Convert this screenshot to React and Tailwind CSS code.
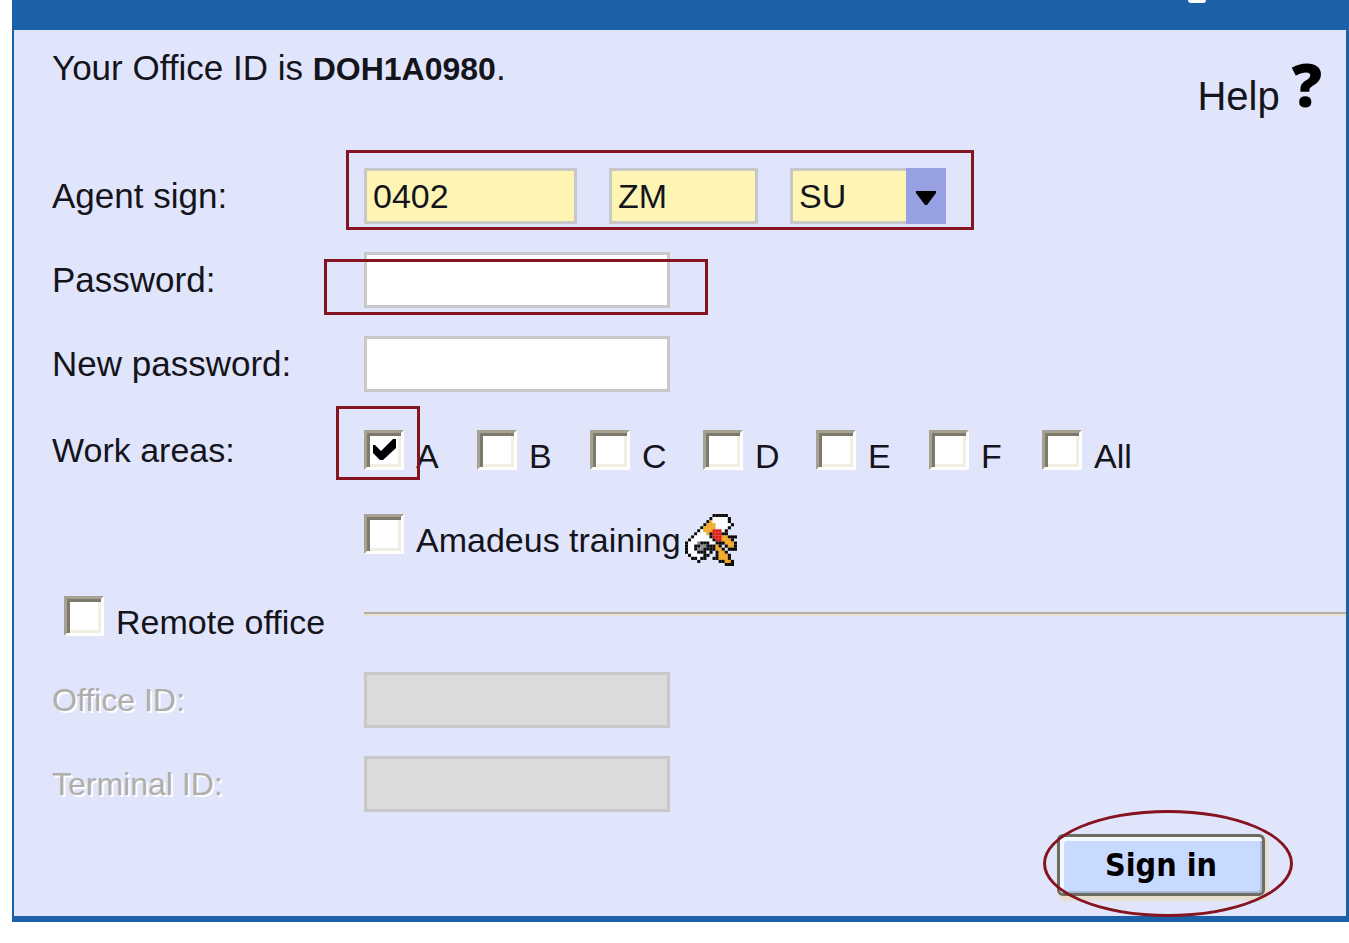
import React, { useState } from "react";

const workAreas = ["A", "B", "C", "D", "E", "F", "All"];

const fieldClass =
  "block h-14 rounded-none border-3 border-[#c8c8c8] px-[6px] outline-none";

// --- Pixel art for the training icon ---
const scrollPixels = [
  ".........KKKKK...",
  "........KWWWWWK..",
  ".......KYWWWWWK..",
  "......KYYYWWWWWK.",
  ".....KYYYYWWWWK..",
  "....KWYYYRRRWK...",
  "...KWWWYKRRRKK...",
  "..KWWWWWKRRRYYKKK",
  ".KWWWWWWWKRRYYYK.",
  "KWWWGKKKWWKKKYYYK",
  "KWWKKGGKKKYK.KYYK",
  "KWWKGGKKKKYYK.KKK",
  "KWWWKKKWK.KYYK...",
  ".KWWWWKK..KYYYK..",
  "..KKWKK..KKYYYK..",
  "....K......KKYYK.",
  ".............KKK.",
];

const pixelColors = {
  K: "#0b0b0b",
  W: "#ffffff",
  Y: "#f5a81c",
  R: "#e01b0c",
  G: "#8a8a8a",
};

function TrainingIcon() {
  return (
    <svg
      viewBox="0 0 17 17"
      className="mt-3 size-[52px] shrink-0"
      aria-hidden="true"
    >
      {scrollPixels.map((row, y) =>
        row
          .split("")
          .map((p, x) =>
            p === "." ? null : (
              <rect key={`${x}-${y}`} x={x} y={y} width="1.02" height="1.02" fill={pixelColors[p]} />
            )
          )
      )}
    </svg>
  );
}

// --- Red marker drawn over a field ---
function Marker({ className }) {
  return (
    <span
      aria-hidden="true"
      className={`absolute border-3 border-[#84141f] pointer-events-none ${className}`}
    />
  );
}

function Checkbox({ label, checked, onChange, marked }) {
  return (
    <label className="flex items-center gap-3 whitespace-nowrap">
      <span className="relative size-10 shrink-0">
        <input
          type="checkbox"
          checked={checked}
          onChange={onChange}
          className="block size-10 appearance-none bg-white border-3 border-t-[#a5a294] border-l-[#a5a294] border-r-white border-b-white shadow-[inset_3px_3px_0_#7d7a6c,inset_-3px_-3px_0_#f1efe2]"
        />
        {checked && (
          <svg
            viewBox="0 0 24 22"
            className="absolute left-[9px] top-[9px] h-[22px] w-6 pointer-events-none"
            aria-hidden="true"
          >
            <path d="M0 6 H2 L8 12 L20 0 H23 V9 L10 21 H7 L0 14 Z" fill="#000" />
          </svg>
        )}
        {marked && <Marker className="-left-7 -right-4 -top-6 -bottom-[10px]" />}
      </span>
      <span className="mt-3 leading-10">{label}</span>
    </label>
  );
}

function Row({ label, htmlFor, disabled, children }) {
  return (
    <div className="flex h-14 items-center">
      <label
        htmlFor={htmlFor}
        className={
          disabled
            ? "w-[312px] shrink-0 text-[32px] text-[#b0aeaa] [text-shadow:2px_2px_0_#fff]"
            : "w-[312px] shrink-0 text-[35px]"
        }
      >
        {label}
      </label>
      {children}
    </div>
  );
}

export default function App() {
  const [areas, setAreas] = useState(["A"]);
  const [training, setTraining] = useState(false);
  const [remote, setRemote] = useState(false);

  const toggleArea = (area) =>
    setAreas((prev) =>
      prev.includes(area) ? prev.filter((a) => a !== area) : [...prev, area]
    );

  return (
    <div className="bg-white pl-3 pb-5">
      <form
        onSubmit={(e) => e.preventDefault()}
        className="border-l-2 border-r-3 border-b-6 border-[#1c60a8] bg-[#e1e5fb] text-[34px] leading-10 text-[#14141c] font-['Liberation_Sans',Arial,sans-serif]"
      >
        {/* --- Title bar --- */}
        <div className="flex h-[30px] justify-end bg-[#1c60a8] pr-[140px]">
          <span className="h-[3px] w-[18px] rounded-b-full bg-white" />
        </div>

        <div className="pl-[38px]">
          {/* --- Office ID and help --- */}
          <div className="flex h-[138px] items-start justify-between pt-[18px] pr-6">
            <p className="text-[35px]">
              Your Office ID is <b className="text-[32px]">DOH1A0980</b>.
            </p>
            <a href="#help" className="flex items-start gap-3 text-[40px]">
              <span className="pt-7">Help</span>
              <span className="pt-4 text-[60px] font-extrabold text-black font-['Open_Sans',sans-serif]">
                ?
              </span>
            </a>
          </div>

          {/* --- Sign in fields --- */}
          <div className="flex flex-col gap-7">
            <Row label="Agent sign:" htmlFor="agent-number">
              <div className="relative flex gap-8">
                <input
                  id="agent-number"
                  defaultValue="0402"
                  className={`${fieldClass} w-[213px] bg-[#fef5b4]`}
                />
                <input
                  aria-label="Agent initials"
                  defaultValue="ZM"
                  className={`${fieldClass} w-[149px] bg-[#fef5b4]`}
                />
                <div className="relative">
                  <select
                    aria-label="Duty code"
                    className={`${fieldClass} w-[156px] appearance-none bg-[#fef5b4]`}
                  >
                    <option>SU</option>
                  </select>
                  <span className="absolute inset-y-0 right-0 flex w-10 items-center justify-center bg-[#96a0e2] pointer-events-none">
                    <svg viewBox="0 0 20 14" className="mt-1 w-5" aria-hidden="true">
                      <path d="M0 0 H20 V2 L11 14 H9 L0 2 Z" fill="#000" />
                    </svg>
                  </span>
                </div>
                <Marker className="-left-[18px] -right-7 -top-[18px] -bottom-[6px]" />
              </div>
            </Row>

            <Row label="Password:" htmlFor="password">
              <div className="relative">
                <input
                  id="password"
                  type="password"
                  className={`${fieldClass} w-[306px] bg-white`}
                />
                <Marker className="-left-10 -right-[38px] top-[7px] -bottom-[7px]" />
              </div>
            </Row>

            <Row label="New password:" htmlFor="new-password">
              <input
                id="new-password"
                type="password"
                className={`${fieldClass} w-[306px] bg-white`}
              />
            </Row>

            <div role="group" aria-labelledby="areas" className="flex h-[60px] items-center">
              <span id="areas" className="w-[312px] shrink-0">
                Work areas:
              </span>
              {workAreas.map((area) => (
                <div key={area} className="w-[113px] shrink-0">
                  <Checkbox
                    label={area}
                    checked={areas.includes(area)}
                    onChange={() => toggleArea(area)}
                    marked={area === "A"}
                  />
                </div>
              ))}
            </div>

            <div className="flex h-[52px] items-center gap-1 pl-[312px]">
              <Checkbox
                label="Amadeus training"
                checked={training}
                onChange={() => setTraining(!training)}
              />
              <TrainingIcon />
            </div>

            {/* --- Remote office --- */}
            <div className="flex h-14 items-center">
              <div className="w-[312px] shrink-0 pl-3">
                <Checkbox
                  label="Remote office"
                  checked={remote}
                  onChange={() => setRemote(!remote)}
                />
              </div>
              <hr className="mb-1 grow border-t-2 border-b-2 border-t-[#b3ae9f] border-b-[#e9e2cf]" />
            </div>

            <Row label="Office ID:" htmlFor="office-id" disabled={!remote}>
              <input
                id="office-id"
                disabled={!remote}
                className={`${fieldClass} w-[306px] bg-[#dbdbdb]`}
              />
            </Row>

            <Row label="Terminal ID:" htmlFor="terminal-id" disabled={!remote}>
              <input
                id="terminal-id"
                disabled={!remote}
                className={`${fieldClass} w-[306px] bg-[#dbdbdb]`}
              />
            </Row>
          </div>

          <div className="flex justify-end pt-[22px] pr-[81px] pb-5">
            <div className="relative">
              <button
                type="submit"
                className="block h-[62px] w-[208px] rounded-md border-3 border-[#6d6c62] bg-[#c8daff] text-[32px] font-bold text-black font-['DejaVu_Sans_Condensed','DejaVu_Sans',sans-serif] shadow-[inset_4px_4px_0_#f4f8ff,inset_-2px_-2px_0_#a9b8d8,2px_3px_2px_2px_#e6dfd0]"
              >
                Sign in
              </button>
              <Marker className="-left-[14px] -right-7 -top-6 -bottom-[21px] rounded-[50%]" />
            </div>
          </div>
        </div>
      </form>
    </div>
  );
}
